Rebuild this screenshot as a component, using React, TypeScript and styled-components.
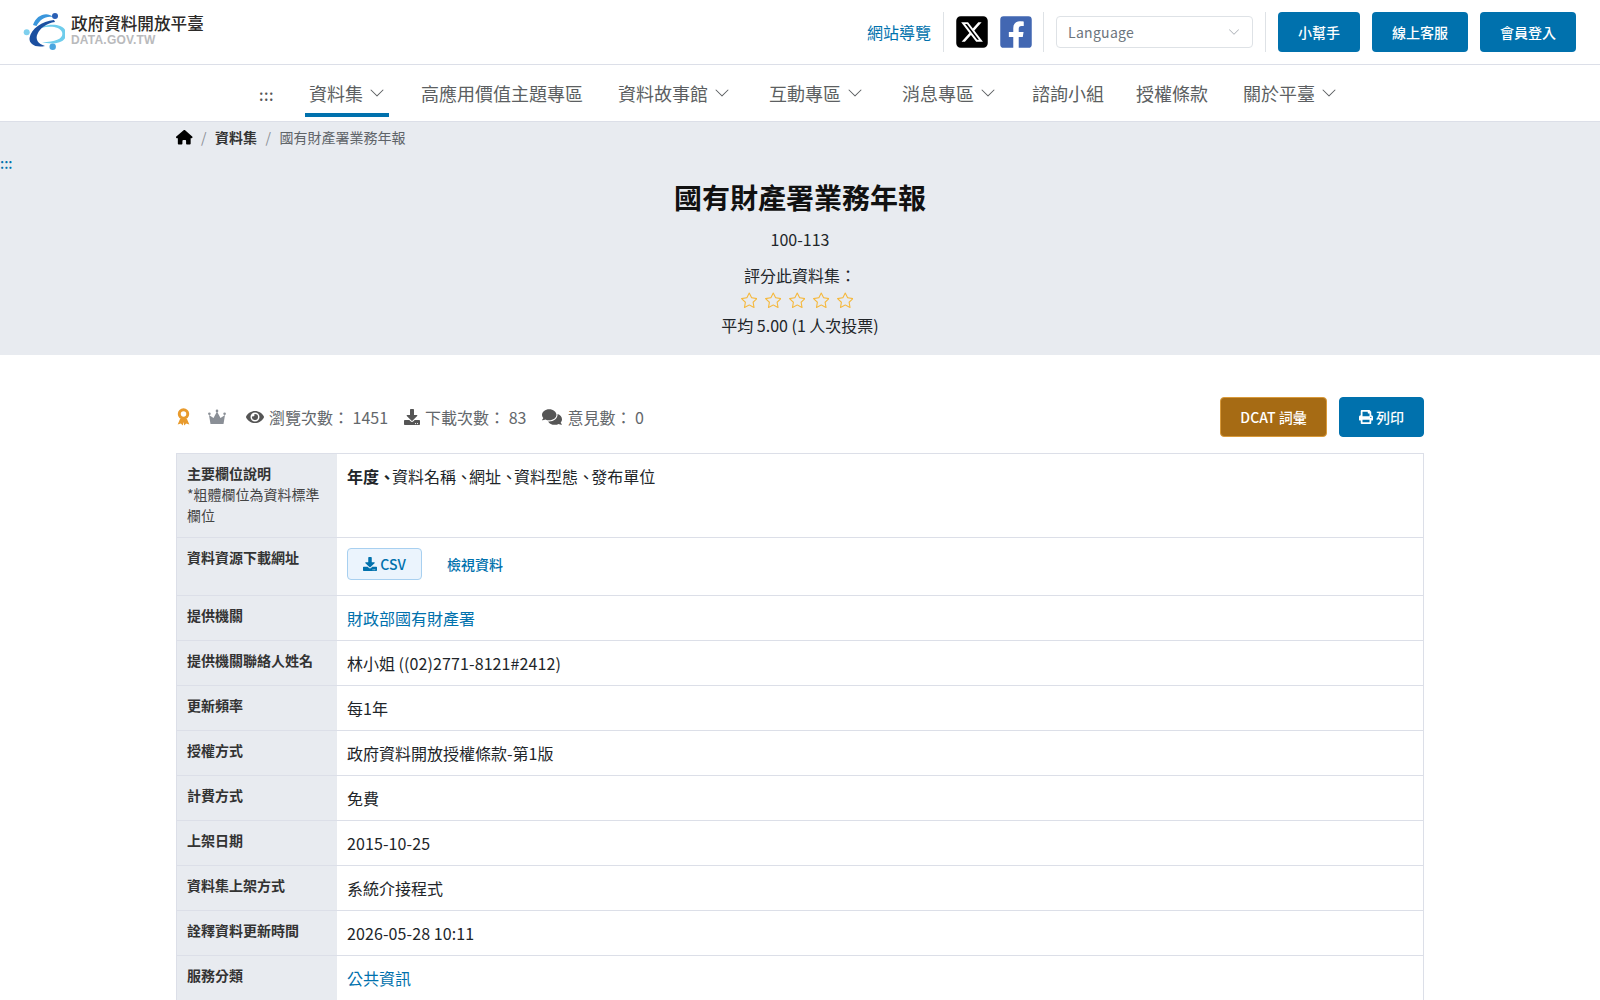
import React from "react";
import styled, { createGlobalStyle } from "styled-components";
import { FaEye, FaDownload, FaComments, FaPrint, FaFacebookSquare } from "react-icons/fa";
import { FaSquareXTwitter, FaHouse } from "react-icons/fa6";
import { BsChevronDown, BsStar } from "react-icons/bs";

const Global = createGlobalStyle`
  html, body { margin: 0; padding: 0; background: #fff; }
  body { font-family: "Noto Sans CJK TC", "Noto Sans", sans-serif; font-size: 16px; color: #212529; }
  * { box-sizing: border-box; }
`;

const blue = "#0071ad";

const TopBar = styled.header`
  height: 65px; display: flex; align-items: center; justify-content: space-between;
  padding: 0 24px 0 23px; border-bottom: 1px solid #dcdfe8;
`;
const Logo = styled.div`display: flex; align-items: center; gap: 6px; margin-top: -2px;`;
const LogoText = styled.div`display: flex; flex-direction: column; margin-top: -2px;`;
const LogoTitle = styled.span`font-size: 16.6px; line-height: 20px; font-weight: 500; color: #2c2a28; white-space: nowrap;`;
const LogoSub = styled.span`font-family: "Liberation Sans", sans-serif; font-size: 12px; line-height: 14px; font-weight: 700; color: #b9babc; letter-spacing: 0.2px;`;
const TopRight = styled.div`display: flex; align-items: center;`;
const SiteMap = styled.a`font-size: 16px; color: ${blue}; margin-right: 12px;`;
const Sep = styled.span`width: 1px; height: 40px; background: #dee2e6;`;
const Social = styled.span<{ $color: string }>`
  display: inline-flex; color: ${(p) => p.$color}; font-size: 36px; line-height: 0;
`;
const SocialGroup = styled.div`display: flex; align-items: center; gap: 8px; margin: 0 9px 0 10px;`;
const LangSelect = styled.div`
  width: 197px; height: 32px; margin: 0 12px; padding: 0 12px 0 11px; display: flex; align-items: center; justify-content: space-between;
  border: 1px solid #dee2e6; border-radius: 4px; font-size: 14px; color: #6c757d; letter-spacing: .3px;
  svg { font-size: 12px; color: #a9aeb4; }
`;
const TopButton = styled.button<{ $w: number }>`
  width: ${(p) => p.$w}px; height: 40px; margin-left: 12px; background: ${blue}; color: #fff; border: 0; border-radius: 4px;
  font: 500 14px "Noto Sans CJK TC", sans-serif;
`;
const Nav = styled.nav`
  height: 57px; display: flex; border-bottom: 1px solid #dcdfe8; padding-left: 259px;
`;
const NavMark = styled.span`
  font-size: 15px; color: #555; font-weight: 500; letter-spacing: .5px; align-self: center; margin: 3px 32px 0 0; width: 14px;
`;
const NavItem = styled.a<{ $active?: boolean; $mr: number }>`
  height: 52px; display: flex; align-items: center; gap: 6px; padding: 7px 4px 0; margin-right: ${(p) => p.$mr}px;
  font-size: 18px; color: #5c5f62; white-space: nowrap;
  border-bottom: 4px solid ${(p) => (p.$active ? blue : "transparent")};
  svg { font-size: 16px; }
`;
const Hero = styled.section`
  height: 233px; background: #e8ebf0; position: relative; text-align: center; color: #212529;
`;
const Crumbs = styled.div`
  width: 1248px; margin: 0 auto; height: 30px; display: flex; align-items: center; font-size: 14px; color: #5f6469;
  svg { font-size: 16.5px; color: #000; }
`;
const Slash = styled.span`margin: 0 8.5px; color: #8b9096;`;
const CrumbLink = styled.a`font-weight: 700; color: #333;`;
const SkipMark = styled.a`position: absolute; left: 0; top: 31px; font-size: 14px; font-weight: 500; color: ${blue}; line-height: 20px;`;
const Title = styled.h1`margin: 25px 0 0; font-size: 28px; line-height: 40px; font-weight: 700; color: #111;`;
const Subtitle = styled.p`margin: 10px 0 0; line-height: 24px;`;
const RateLabel = styled.p`margin: 12px 0 0; line-height: 24px;`;
const Stars = styled.div`
  display: flex; justify-content: center; gap: 7.5px; height: 20px; margin-top: 3px; padding-right: 6px; align-items: center;
  svg { font-size: 16.5px; color: #f5b83d; }
`;
const Average = styled.p`margin: 3px 0 0; line-height: 24px;`;
const Main = styled.main`width: 1248px; margin: 0 auto; padding-bottom: 80px;`;
const Tools = styled.div`height: 98px; display: flex; align-items: center; justify-content: space-between; padding-top: 28px; padding-bottom: 3px;`;
const Stats = styled.div`display: flex; align-items: center; color: #63676b; font-size: 16px;`;
const Badge = styled.svg<{ $mr: number }>`
  flex: none; margin-right: ${(p) => p.$mr}px;
`;
const Stat = styled.span<{ $icon: number; $mr: number }>`
  display: inline-flex; align-items: center; gap: 5px; margin-right: ${(p) => p.$mr}px; white-space: nowrap;
  svg { font-size: ${(p) => p.$icon}px; color: #555; }
`;
const ToolButtons = styled.div`display: flex; gap: 12px;`;
const ActionButton = styled.button<{ $w: number; $bg: string; $border: string }>`
  width: ${(p) => p.$w}px; height: 40px; background: ${(p) => p.$bg}; border: 1px solid ${(p) => p.$border}; border-radius: 4px; color: #fff;
  font: 500 14px "Noto Sans CJK TC", sans-serif; display: inline-flex; align-items: center; justify-content: center; gap: 3px;
`;
const Table = styled.div`border: 1px solid #dcdfe8; border-bottom: 0; display: grid; grid-template-columns: 160px 1fr;`;
const Label = styled.div<{ $h: number }>`
  min-height: ${(p) => p.$h}px; background: #e8ebf0; padding: 9px 10px; font-size: 14px; line-height: 21px; font-weight: 700; color: #333;
  border-bottom: 1px solid #dcdfe8;
`;
const Note = styled.span`display: block; font-weight: 400; color: #444;`;
const Value = styled.div`padding: 9px 10px; line-height: 26px; border-bottom: 1px solid #dcdfe8; color: #212529; &>a{color:${blue};}`;
const Comma = styled.span`letter-spacing: -3px;`;
const Numeric = styled.span`letter-spacing: .1px;`;
const FileButton = styled.a`
  display: inline-flex; align-items: center; justify-content: center; gap: 3px; width: 75px; height: 32px;
  background: #ebf4fd; border: 1px solid #a8d0f0; border-radius: 4px; font-size: 14px; font-weight: 500; color: ${blue};
`;
const ViewLink = styled.a`font-size: 14px; font-weight: 500; color: ${blue}; margin-left: 25px;`;
const Files = styled.div`display: flex; align-items: center; height: 32px; margin-top: 1px;`;

const LogoMark = () => (
  <svg width="42" height="40" viewBox="8 6 42 40">
    <path d="M18 27 C28 20 44 20 47 27 C49 33 42 37 27 37 C36 40 53 39 51 27 C49 18 30 17 18 27Z" fill="#6fcdec" />
    <path d="M39 15 C27 16 16 24 14.5 33 C14 39 20 43 30 41 C23 39 20 34 22.5 29 C25 23 32 18 40 17Z" fill="#1b4fa0" />
    <path d="M18 20 C21 10 32 6 38 12 C31 10.5 25 14 21.5 21Z" fill="#3a96dc" />
    <circle cx="40" cy="11" r="3" fill="#2a5fb4" />
    <circle cx="11.7" cy="27.3" r="3" fill="#7fd0ee" />
    <circle cx="37.7" cy="41.7" r="3.2" fill="#4aa6e0" />
  </svg>
);

const Chevron = () => <BsChevronDown />;

const rows: [string, React.ReactNode][] = [
  ["提供機關", <a>財政部國有財產署</a>],
  ["提供機關聯絡人姓名", <>林小姐 <Numeric>((02)2771-8121#2412)</Numeric></>],
  ["更新頻率", "每1年"],
  ["授權方式", "政府資料開放授權條款-第1版"],
  ["計費方式", "免費"],
  ["上架日期", <Numeric>2015-10-25</Numeric>],
  ["資料集上架方式", "系統介接程式"],
  ["詮釋資料更新時間", <Numeric>2026-05-28 10:11</Numeric>],
  ["服務分類", <a>公共資訊</a>],
];

export default function App() {
  return (
    <>
      <Global />
      <TopBar>
        <Logo>
          <LogoMark />
          <LogoText>
            <LogoTitle>政府資料開放平臺</LogoTitle>
            <LogoSub>DATA.GOV.TW</LogoSub>
          </LogoText>
        </Logo>
        <TopRight>
          <SiteMap>網站導覽</SiteMap>
          <Sep />
          <SocialGroup>
            <Social $color="#000"><FaSquareXTwitter /></Social>
            <Social $color="#4267b2"><FaFacebookSquare /></Social>
          </SocialGroup>
          <Sep />
          <LangSelect>Language <BsChevronDown /></LangSelect>
          <Sep />
          <TopButton $w={82}>小幫手</TopButton>
          <TopButton $w={96}>線上客服</TopButton>
          <TopButton $w={96}>會員登入</TopButton>
        </TopRight>
      </TopBar>
      <Nav>
        <NavMark>:::</NavMark>
        <NavItem $active $mr={28}>資料集 <Chevron /></NavItem>
        <NavItem $mr={27}>高應用價值主題專區</NavItem>
        <NavItem $mr={31}>資料故事館 <Chevron /></NavItem>
        <NavItem $mr={31}>互動專區 <Chevron /></NavItem>
        <NavItem $mr={28}>消息專區 <Chevron /></NavItem>
        <NavItem $mr={24}>諮詢小組</NavItem>
        <NavItem $mr={27}>授權條款</NavItem>
        <NavItem $mr={0}>關於平臺 <Chevron /></NavItem>
      </Nav>
      <Hero>
        <Crumbs>
          <FaHouse />
          <Slash>/</Slash>
          <CrumbLink>資料集</CrumbLink>
          <Slash>/</Slash>
          <span>國有財產署業務年報</span>
        </Crumbs>
        <SkipMark>:::</SkipMark>
        <Title>國有財產署業務年報</Title>
        <Subtitle>100-113</Subtitle>
        <RateLabel>評分此資料集：</RateLabel>
        <Stars><BsStar /><BsStar /><BsStar /><BsStar /><BsStar /></Stars>
        <Average>平均 5.00 (1 人次投票)</Average>
      </Hero>
      <Main>
        <Tools>
          <Stats>
            <Badge $mr={17} width="15" height="18" viewBox="0 0 13 17">
              <circle cx="6.5" cy="5.6" r="4" fill="none" stroke="#e89a2c" strokeWidth="2.8" />
              <path d="M3.2 10.5 L1 15.5 L4 14.6 L5.8 16.6 L6.5 13.2 L7.2 16.6 L9 14.6 L12 15.5 L9.8 10.5 Z" fill="#e89a2c" />
            </Badge>
            <Badge $mr={20} width="18" height="16" viewBox="0 0 18 15">
              <path d="M2.5 14.5 L1 5.5 L5.5 8.5 L9 2 L12.5 8.5 L17 5.5 L15.5 14.5 Z" fill="#8a8f96" />
              <circle cx="1.4" cy="4.2" r="1.3" fill="#8a8f96" />
              <circle cx="9" cy="1.4" r="1.3" fill="#8a8f96" />
              <circle cx="16.6" cy="4.2" r="1.3" fill="#8a8f96" />
            </Badge>
            <Stat $icon={18} $mr={16}><FaEye />瀏覽次數： 1451</Stat>
            <Stat $icon={16} $mr={16}><FaDownload />下載次數： 83</Stat>
            <Stat $icon={20} $mr={0}><FaComments />意見數： 0</Stat>
          </Stats>
          <ToolButtons>
            <ActionButton $w={107} $bg="#a66b14" $border="#d99a3a">DCAT 詞彙</ActionButton>
            <ActionButton $w={85} $bg={blue} $border={blue}><FaPrint />列印</ActionButton>
          </ToolButtons>
        </Tools>
        <Table>
          <Label $h={84}>主要欄位說明<Note>*粗體欄位為資料標準欄位</Note></Label>
          <Value>
            <b>年度<Comma>、</Comma></b>資料名稱<Comma>、</Comma>網址<Comma>、</Comma>資料型態<Comma>、</Comma>發布單位
          </Value>
          <Label $h={58}>資料資源下載網址</Label>
          <Value>
            <Files>
              <FileButton><FaDownload />CSV</FileButton>
              <ViewLink>檢視資料</ViewLink>
            </Files>
          </Value>
          {rows.map(([k, v]) => (
            <React.Fragment key={k}>
              <Label $h={45}>{k}</Label>
              <Value>{v}</Value>
            </React.Fragment>
          ))}
        </Table>
      </Main>
    </>
  );
}
